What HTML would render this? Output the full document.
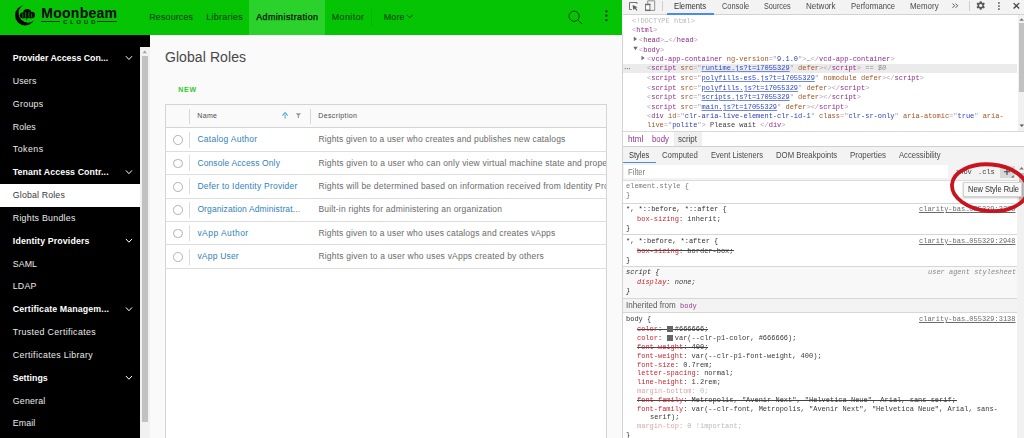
<!DOCTYPE html>
<html lang="en"><head><meta charset="utf-8"><title>Global Roles</title>
<style>
html,body{margin:0;padding:0}
body{width:1024px;height:438px;position:relative;overflow:hidden;background:#fafafa;font-family:"Liberation Sans",sans-serif}
body>div,body>svg,.t,.clip{position:absolute}
.t{white-space:pre;line-height:0}
.clip{overflow:hidden}
.clip>.t{position:absolute}

</style></head>
<body>
<div style="left:0px;top:0px;width:622.3px;height:35.2px;background:#04c404;"></div>
<div style="left:249.3px;top:0px;width:75.6px;height:35.2px;background:#2bd22b;"></div>
<div style="left:370.6px;top:9px;width:0.8px;height:17px;background:rgba(0,0,0,.08);"></div>
<div style="left:41.3px;top:21.1px;width:18.6px;height:0.8px;background:#063006;"></div>
<div style="left:97.3px;top:21.1px;width:19.7px;height:0.8px;background:#063006;"></div>
<svg style="left:0;top:0" width="622" height="35" viewBox="0 0 622 35">
<defs><mask id="mk"><rect x="0" y="0" width="60" height="35" fill="#fff"/><circle cx="28.1" cy="13.15" r="9.5" fill="#000"/></mask></defs>
<circle cx="25.1" cy="15.45" r="10.1" fill="#050505" mask="url(#mk)"/>
<g fill="#050505"><circle cx="22.7" cy="15.3" r="2.9"/><circle cx="27.2" cy="13" r="4"/><circle cx="31.8" cy="15" r="3.15"/><rect x="22.7" y="14" width="9.1" height="4.2"/></g>
<g stroke="#05c005" stroke-width="0.7" stroke-linecap="round"><path d="M22.9 14v3.2M25.7 12.4v4.8M28.9 12.4v4.8M31.7 14v3.2"/></g>
<path d="M26.6 18v2.2" stroke="#050505" stroke-width="0.6"/>
<path d="M406.6 14.7l3.1 3.1 3.1-3.1" fill="none" stroke="#0c4a0c" stroke-width="1"/>
<circle cx="574.1" cy="16.2" r="5.1" fill="none" stroke="#0a3a0a" stroke-width="0.9"/>
<path d="M578.5 20.6l3.3 3.2" stroke="#0a3a0a" stroke-width="1" stroke-linecap="round"/>
<circle cx="606.4" cy="11.3" r="1.15" fill="#083008"/><circle cx="606.4" cy="15.7" r="1.15" fill="#083008"/><circle cx="606.4" cy="20.2" r="1.15" fill="#083008"/>
</svg>
<div style="left:0px;top:35px;width:150px;height:403px;background:#000;"></div>
<div style="left:140.2px;top:47px;width:9.8px;height:391px;background:#f1f1f1;"></div>
<div style="left:141.5px;top:56.4px;width:6.3px;height:366px;background:#c1c1c1;"></div>
<svg style="left:140px;top:47px" width="10" height="10" viewBox="0 0 10 10"><path d="M2.6 6.3L4.7 3.6 6.8 6.3z" fill="#a0a0a0"/></svg>
<div style="left:0px;top:183.5px;width:140.2px;height:23.3px;background:#ffffff;"></div>
<svg style="left:0;top:0" width="150" height="438" viewBox="0 0 150 438"><g fill="none" stroke="#ffffff" stroke-width="1"><path d="M125.9 56.20l3.05 3.3 3.05-3.3"/><path d="M125.9 170.40l3.05 3.3 3.05-3.3"/><path d="M125.9 238.92l3.05 3.3 3.05-3.3"/><path d="M125.9 307.44l3.05 3.3 3.05-3.3"/><path d="M125.9 375.96l3.05 3.3 3.05-3.3"/></g></svg>
<div style="left:165px;top:104px;width:441.5px;height:340px;background:#ffffff;border:0.8px solid #d4d4d4;box-sizing:border-box"></div>
<div style="left:165px;top:104px;width:441.5px;height:23.8px;background:#fafafa;border:0.8px solid #d4d4d4;box-sizing:border-box"></div>
<div style="left:189.2px;top:108.5px;width:0.8px;height:15.4px;background:#d8d8d8;"></div>
<div style="left:310.0px;top:108.5px;width:0.8px;height:15.4px;background:#d8d8d8;"></div>
<svg style="left:280px;top:110px" width="24" height="12" viewBox="280 110 24 12">
<path d="M285.1 118.6v-4" fill="none" stroke="#55a6cf" stroke-width="1"/>
<path d="M282.5 115.6l2.6-3 2.6 3" fill="none" stroke="#55a6cf" stroke-width="1.1"/>
<path d="M295.8 113.2h5.2l-2 2.5v2.3h-1.2v-2.3z" fill="#9c9c9c"/>
</svg>
<div style="left:165.8px;top:150.79999999999998px;width:440px;height:0.8px;background:#dedede;"></div>
<div style="left:189.2px;top:131.6px;width:0.8px;height:16px;background:#dcdcdc;"></div>
<div style="left:173.1px;top:135.20px;width:9.6px;height:9.6px;border:0.8px solid #b0b0b0;border-radius:50%;box-sizing:border-box;background:#fff"></div>
<div style="left:165.8px;top:174.2px;width:440px;height:0.8px;background:#dedede;"></div>
<div style="left:189.2px;top:155.0px;width:0.8px;height:16px;background:#dcdcdc;"></div>
<div style="left:173.1px;top:158.60px;width:9.6px;height:9.6px;border:0.8px solid #b0b0b0;border-radius:50%;box-sizing:border-box;background:#fff"></div>
<div style="left:165.8px;top:197.6px;width:440px;height:0.8px;background:#dedede;"></div>
<div style="left:189.2px;top:178.4px;width:0.8px;height:16px;background:#dcdcdc;"></div>
<div style="left:173.1px;top:182.00px;width:9.6px;height:9.6px;border:0.8px solid #b0b0b0;border-radius:50%;box-sizing:border-box;background:#fff"></div>
<div style="left:165.8px;top:221.0px;width:440px;height:0.8px;background:#dedede;"></div>
<div style="left:189.2px;top:201.8px;width:0.8px;height:16px;background:#dcdcdc;"></div>
<div style="left:173.1px;top:205.40px;width:9.6px;height:9.6px;border:0.8px solid #b0b0b0;border-radius:50%;box-sizing:border-box;background:#fff"></div>
<div style="left:165.8px;top:244.39999999999998px;width:440px;height:0.8px;background:#dedede;"></div>
<div style="left:189.2px;top:225.2px;width:0.8px;height:16px;background:#dcdcdc;"></div>
<div style="left:173.1px;top:228.80px;width:9.6px;height:9.6px;border:0.8px solid #b0b0b0;border-radius:50%;box-sizing:border-box;background:#fff"></div>
<div style="left:165.8px;top:267.8px;width:440px;height:0.8px;background:#dedede;"></div>
<div style="left:189.2px;top:248.60000000000002px;width:0.8px;height:16px;background:#dcdcdc;"></div>
<div style="left:173.1px;top:252.20px;width:9.6px;height:9.6px;border:0.8px solid #b0b0b0;border-radius:50%;box-sizing:border-box;background:#fff"></div>
<div style="left:622.5px;top:0px;width:401.5px;height:438px;background:#ffffff;"></div>
<div style="left:622.2px;top:35px;width:0.8px;height:403px;background:#d2d2d2;"></div>
<div style="left:623.0px;top:0px;width:401.5px;height:14.6px;background:#f3f3f3;"></div>
<div style="left:623.0px;top:14.1px;width:401.5px;height:0.7px;background:#d2d2d2;"></div>
<div style="left:666.7px;top:13.1px;width:47.2px;height:1.5px;background:#4a8af4;"></div>
<div style="left:662.0px;top:0.8px;width:0.8px;height:9.8px;background:#cfcfcf;"></div>
<div style="left:969.1px;top:0.8px;width:0.8px;height:9.8px;background:#cfcfcf;"></div>
<svg style="left:622px;top:0" width="402" height="15" viewBox="622 0 402 15">
<g fill="none" stroke="#6a6a6a" stroke-width="0.95">
<path d="M637 4V2.5h-7.5v7h2.2" />
<path d="M647.7 3.6V0.8h7v9.6h-4.6" stroke="#8a8a8a"/>
<path d="M952.5 3.6l2.1 2.1-2.1 2.1M955.6 3.6l2.1 2.1-2.1 2.1" stroke="#555" stroke-width="1"/>
<path d="M1013.6 3.1l5.6 5.4M1019.2 3.1l-5.6 5.4" stroke="#444" stroke-width="1.3"/>
</g>
<path d="M632.6 4.9l5 2.3-2 0.6 1.8 2.2-0.9 0.7-1.7-2.3-1.5 1.5z" fill="#5a5a5a"/>
<rect x="645.6" y="4.2" width="4.3" height="6.4" fill="#fff" stroke="#6a6a6a" stroke-width="0.9"/>
<rect x="645.2" y="3.9" width="5.1" height="1.3" fill="#6a6a6a"/><rect x="645.2" y="9.6" width="5.1" height="1.3" fill="#6a6a6a"/>
<g fill="#5a5a5a">
<path d="M979.52 2.58L979.86 1.18L981.54 1.18L981.88 2.58L982.64 3.02L984.02 2.61L984.86 4.07L983.82 5.06L983.82 5.94L984.86 6.93L984.02 8.39L982.64 7.98L981.88 8.42L981.54 9.82L979.86 9.82L979.52 8.42L978.76 7.98L977.38 8.39L976.54 6.93L977.58 5.94L977.58 5.06L976.54 4.07L977.38 2.61L978.76 3.02z"/>
<rect x="998.1" y="2.2" width="1.6" height="1.6"/><rect x="998.1" y="5.3" width="1.6" height="1.6"/><rect x="998.1" y="8.3" width="1.6" height="1.6"/>
</g>
<circle cx="980.7" cy="5.5" r="1.6" fill="#f3f3f3"/>
</svg>
<div style="left:623.0px;top:63.5px;width:394.0px;height:9.6px;background:#ebebeb;"></div>
<svg style="left:622px;top:15px" width="402" height="116" viewBox="622 15 402 116">
<g fill="#6e6e6e"><path d="M633.8 36.6l3.2 2.3-3.2 2.3z"/><path d="M633.3 46.8h4.4l-2.2 3.4z"/><path d="M641.5 55.7l3.2 2.3-3.2 2.3z"/>
<circle cx="625.2" cy="68.6" r="0.6"/><circle cx="627.4" cy="68.6" r="0.6"/><circle cx="629.6" cy="68.6" r="0.6"/></g>
</svg>
<div style="left:1017.6px;top:15px;width:6.4px;height:116px;background:#f1f1f1;"></div>
<div style="left:1018.8px;top:23.4px;width:5.2px;height:68.2px;background:#c1c1c1;"></div>
<svg style="left:1017px;top:15px" width="7" height="116" viewBox="1017 15 7 116"><path d="M1019.3 20.8l2.3-2.6 2.3 2.6z" fill="#777"/><path d="M1019.6 124.6h4.4l-2.2 2.5z" fill="#555"/></svg>
<div style="left:623.0px;top:131.2px;width:401.5px;height:0.8px;background:#d8d8d8;"></div>
<div style="left:673.9px;top:132px;width:27.8px;height:14px;background:#efefef;"></div>
<div style="left:623.0px;top:146px;width:401.5px;height:17.9px;background:#f3f3f3;border-top:0.8px solid #d0d0d0;border-bottom:0.8px solid #d0d0d0;box-sizing:border-box"></div>
<div style="left:623px;top:161.7px;width:33px;height:2.0px;background:#4a8af4;"></div>
<div style="left:623.0px;top:163.4px;width:394.5px;height:17.2px;background:#f3f3f3;"></div>
<div style="left:624px;top:164.8px;width:324.4px;height:13.2px;background:#ffffff;"></div>
<div style="left:999.8px;top:165.6px;width:14.8px;height:12.8px;background:#d8d8d8;"></div>
<svg style="left:999px;top:165px" width="17" height="14" viewBox="999 165 17 14">
<path d="M1007 168.7v6.2M1003.9 171.8h6.2" stroke="#444" stroke-width="1.1"/><path d="M1013.6 175.2v2.4h-2.4z" fill="#555"/></svg>
<div style="left:623.0px;top:180.3px;width:394.5px;height:0.8px;background:#dcdcdc;"></div>
<div style="left:623.0px;top:202.6px;width:394.5px;height:0.8px;background:#d6d6d6;"></div>
<div style="left:623.0px;top:233.79999999999998px;width:394.5px;height:0.8px;background:#d6d6d6;"></div>
<div style="left:636.7px;top:250.4px;width:97px;height:0.8px;background:#444;"></div>
<div style="left:623.0px;top:266.1px;width:394.5px;height:0.8px;background:#d6d6d6;"></div>
<div style="left:623.0px;top:266.9px;width:394.5px;height:31px;background:#f8f8f8;"></div>
<div style="left:623.0px;top:298px;width:394.5px;height:15.2px;background:#f3f3f3;border-top:0.8px solid #d6d6d6;border-bottom:0.8px solid #d6d6d6;box-sizing:border-box"></div>
<div style="left:636.7px;top:328.9px;width:71.8px;height:0.8px;background:#444;"></div>
<div style="left:667.3px;top:326.0px;width:6.2px;height:5.6px;background:#666;"></div>
<div style="left:667.3px;top:335.0px;width:6.2px;height:5.6px;background:#666;"></div>
<div style="left:636.7px;top:346.9px;width:71.8px;height:0.8px;background:#444;"></div>
<div style="left:636.7px;top:399.9px;width:320px;height:0.8px;background:#444;"></div>
<div style="left:1017.2px;top:163.4px;width:6.8px;height:275px;background:#f1f1f1;"></div>
<div style="left:1018.6px;top:172.8px;width:5.4px;height:28px;background:#c1c1c1;"></div>
<svg style="left:1017px;top:164px" width="7" height="8" viewBox="1017 164 7 8"><path d="M1019.3 169.6l2.3-2.6 2.3 2.6z" fill="#777"/></svg>
<span class="t" style="left:41.30px;top:12.55px;font:700 14.0px/0 'Liberation Sans', sans-serif;color:#060606;letter-spacing:0.258px">Moonbeam</span>
<span class="t" style="left:63.20px;top:21.86px;font:400 5.6px/0 'Liberation Sans', sans-serif;color:#031803;letter-spacing:3.102px;-webkit-text-stroke:0.2px currentColor">CLOUD</span>
<span class="t" style="left:149.30px;top:16.72px;font:400 8.9px/0 'Liberation Sans', sans-serif;color:#094409;letter-spacing:0.160px;-webkit-text-stroke:0.1px currentColor">Resources</span>
<span class="t" style="left:206.20px;top:16.72px;font:400 8.9px/0 'Liberation Sans', sans-serif;color:#094409;letter-spacing:0.307px;-webkit-text-stroke:0.1px currentColor">Libraries</span>
<span class="t" style="left:256.20px;top:16.72px;font:400 8.9px/0 'Liberation Sans', sans-serif;color:#021002;letter-spacing:0.428px;-webkit-text-stroke:0.25px currentColor">Administration</span>
<span class="t" style="left:331.80px;top:16.72px;font:400 8.9px/0 'Liberation Sans', sans-serif;color:#094409;letter-spacing:0.434px;-webkit-text-stroke:0.1px currentColor">Monitor</span>
<span class="t" style="left:383.70px;top:16.72px;font:400 8.9px/0 'Liberation Sans', sans-serif;color:#094409;letter-spacing:0.189px;-webkit-text-stroke:0.1px currentColor">More</span>
<span class="t" style="left:12.80px;top:58.05px;font:700 8.8px/0 'Liberation Sans', sans-serif;color:#ffffff;letter-spacing:-0.010px">Provider Access Con...</span>
<span class="t" style="left:12.80px;top:80.89px;font:400 8.8px/0 'Liberation Sans', sans-serif;color:#ebebeb;letter-spacing:0.129px">Users</span>
<span class="t" style="left:12.80px;top:103.73px;font:400 8.8px/0 'Liberation Sans', sans-serif;color:#ebebeb;letter-spacing:0.308px">Groups</span>
<span class="t" style="left:12.80px;top:126.57px;font:400 8.8px/0 'Liberation Sans', sans-serif;color:#ebebeb;letter-spacing:0.075px">Roles</span>
<span class="t" style="left:12.80px;top:149.41px;font:400 8.8px/0 'Liberation Sans', sans-serif;color:#ebebeb;letter-spacing:0.485px">Tokens</span>
<span class="t" style="left:12.80px;top:172.25px;font:700 8.8px/0 'Liberation Sans', sans-serif;color:#ffffff;letter-spacing:0.092px">Tenant Access Contr...</span>
<span class="t" style="left:12.80px;top:195.09px;font:400 8.8px/0 'Liberation Sans', sans-serif;color:#3a3a3a;letter-spacing:0.148px">Global Roles</span>
<span class="t" style="left:12.80px;top:217.93px;font:400 8.8px/0 'Liberation Sans', sans-serif;color:#ebebeb;letter-spacing:0.256px">Rights Bundles</span>
<span class="t" style="left:12.80px;top:240.77px;font:700 8.8px/0 'Liberation Sans', sans-serif;color:#ffffff;letter-spacing:0.135px">Identity Providers</span>
<span class="t" style="left:12.80px;top:263.61px;font:400 8.8px/0 'Liberation Sans', sans-serif;color:#ebebeb;letter-spacing:0.077px">SAML</span>
<span class="t" style="left:12.80px;top:286.45px;font:400 8.8px/0 'Liberation Sans', sans-serif;color:#ebebeb;letter-spacing:0.172px">LDAP</span>
<span class="t" style="left:12.80px;top:309.29px;font:700 8.8px/0 'Liberation Sans', sans-serif;color:#ffffff;letter-spacing:0.130px">Certificate Managem...</span>
<span class="t" style="left:12.80px;top:332.13px;font:400 8.8px/0 'Liberation Sans', sans-serif;color:#ebebeb;letter-spacing:0.361px">Trusted Certificates</span>
<span class="t" style="left:12.80px;top:354.97px;font:400 8.8px/0 'Liberation Sans', sans-serif;color:#ebebeb;letter-spacing:0.345px">Certificates Library</span>
<span class="t" style="left:12.80px;top:377.81px;font:700 8.8px/0 'Liberation Sans', sans-serif;color:#ffffff;letter-spacing:0.028px">Settings</span>
<span class="t" style="left:12.80px;top:400.65px;font:400 8.8px/0 'Liberation Sans', sans-serif;color:#ebebeb;letter-spacing:0.201px">General</span>
<span class="t" style="left:12.80px;top:423.49px;font:400 8.8px/0 'Liberation Sans', sans-serif;color:#ebebeb;letter-spacing:0.100px">Email</span>
<span class="t" style="left:164.90px;top:57.35px;font:400 14.0px/0 'Liberation Sans', sans-serif;color:#484848;letter-spacing:0.095px">Global Roles</span>
<span class="t" style="left:178.30px;top:89.57px;font:700 7.0px/0 'Liberation Sans', sans-serif;color:#2fc92f;letter-spacing:0.728px">NEW</span>
<span class="t" style="left:197.30px;top:116.47px;font:400 7.0px/0 'Liberation Sans', sans-serif;color:#4c4c4c;letter-spacing:0.337px">Name</span>
<span class="t" style="left:318.30px;top:116.47px;font:400 7.0px/0 'Liberation Sans', sans-serif;color:#4c4c4c;letter-spacing:0.368px">Description</span>
<span class="t" style="left:197.40px;top:139.25px;font:400 8.5px/0 'Liberation Sans', sans-serif;color:#2f82ba;letter-spacing:0.274px">Catalog Author</span>
<span class="t" style="left:318.40px;top:139.25px;font:400 8.5px/0 'Liberation Sans', sans-serif;color:#6a6a6a;letter-spacing:0.162px">Rights given to a user who creates and publishes new catalogs</span>
<span class="t" style="left:197.40px;top:162.65px;font:400 8.5px/0 'Liberation Sans', sans-serif;color:#2f82ba;letter-spacing:0.121px">Console Access Only</span>
<div class="clip" style="left:318px;width:287.6px;top:152.65px;height:20px"><span class="t" style="left:0.40px;top:162.65px;font:400 8.5px/0 'Liberation Sans', sans-serif;color:#6a6a6a;letter-spacing:0.200px;top:10px">Rights given to a user who can only view virtual machine state and properties</span></div>
<span class="t" style="left:197.40px;top:186.05px;font:400 8.5px/0 'Liberation Sans', sans-serif;color:#2f82ba;letter-spacing:0.235px">Defer to Identity Provider</span>
<div class="clip" style="left:318px;width:287.6px;top:176.05px;height:20px"><span class="t" style="left:0.40px;top:186.05px;font:400 8.5px/0 'Liberation Sans', sans-serif;color:#6a6a6a;letter-spacing:0.200px;top:10px">Rights will be determined based on information received from Identity Provider</span></div>
<span class="t" style="left:197.40px;top:209.45px;font:400 8.5px/0 'Liberation Sans', sans-serif;color:#2f82ba;letter-spacing:0.112px">Organization Administrat...</span>
<span class="t" style="left:318.40px;top:209.45px;font:400 8.5px/0 'Liberation Sans', sans-serif;color:#6a6a6a;letter-spacing:0.183px">Built-in rights for administering an organization</span>
<span class="t" style="left:197.40px;top:232.85px;font:400 8.5px/0 'Liberation Sans', sans-serif;color:#2f82ba;letter-spacing:0.449px">vApp Author</span>
<span class="t" style="left:318.40px;top:232.85px;font:400 8.5px/0 'Liberation Sans', sans-serif;color:#6a6a6a;letter-spacing:0.167px">Rights given to a user who uses catalogs and creates vApps</span>
<span class="t" style="left:197.40px;top:256.25px;font:400 8.5px/0 'Liberation Sans', sans-serif;color:#2f82ba;letter-spacing:0.202px">vApp User</span>
<span class="t" style="left:318.40px;top:256.25px;font:400 8.5px/0 'Liberation Sans', sans-serif;color:#6a6a6a;letter-spacing:0.200px">Rights given to a user who uses vApps created by others</span>
<span class="t" style="left:674.00px;top:5.85px;font:400 8.8px/0 'Liberation Sans', sans-serif;color:#333;transform:scaleX(0.8753);transform-origin:0 0">Elements</span>
<span class="t" style="left:721.60px;top:5.85px;font:400 8.8px/0 'Liberation Sans', sans-serif;color:#4a4a4a;transform:scaleX(0.8426);transform-origin:0 0">Console</span>
<span class="t" style="left:764.00px;top:5.85px;font:400 8.8px/0 'Liberation Sans', sans-serif;color:#4a4a4a;transform:scaleX(0.824);transform-origin:0 0">Sources</span>
<span class="t" style="left:806.00px;top:5.85px;font:400 8.8px/0 'Liberation Sans', sans-serif;color:#4a4a4a;transform:scaleX(0.9174);transform-origin:0 0">Network</span>
<span class="t" style="left:850.80px;top:5.85px;font:400 8.8px/0 'Liberation Sans', sans-serif;color:#4a4a4a;transform:scaleX(0.8757);transform-origin:0 0">Performance</span>
<span class="t" style="left:910.40px;top:5.85px;font:400 8.8px/0 'Liberation Sans', sans-serif;color:#4a4a4a;transform:scaleX(0.8999);transform-origin:0 0">Memory</span>
<span class="t" style="left:631.60px;top:21.07px;font:400 8.0px/0 'Liberation Mono', monospace;color:#333;transform:scaleX(0.8738);transform-origin:0 0"><span style="color:#b8b8b8">&lt;!DOCTYPE html&gt;</span></span>
<span class="t" style="left:631.60px;top:30.07px;font:400 8.0px/0 'Liberation Mono', monospace;color:#333;transform:scaleX(0.8738);transform-origin:0 0"><span style="color:#b3a2b2">&lt;</span><span style="color:#8f2b89">html</span><span style="color:#b3a2b2">&gt;</span></span>
<span class="t" style="left:639.40px;top:40.07px;font:400 8.0px/0 'Liberation Mono', monospace;color:#333;transform:scaleX(0.8738);transform-origin:0 0"><span style="color:#b3a2b2">&lt;</span><span style="color:#8f2b89">head</span><span style="color:#b3a2b2">&gt;</span><span style="color:#3c3c3c">…</span><span style="color:#b3a2b2">&lt;/</span><span style="color:#8f2b89">head</span><span style="color:#b3a2b2">&gt;</span></span>
<span class="t" style="left:639.40px;top:50.07px;font:400 8.0px/0 'Liberation Mono', monospace;color:#333;transform:scaleX(0.8738);transform-origin:0 0"><span style="color:#b3a2b2">&lt;</span><span style="color:#8f2b89">body</span><span style="color:#b3a2b2">&gt;</span></span>
<span class="t" style="left:647.20px;top:59.07px;font:400 8.0px/0 'Liberation Mono', monospace;color:#333;transform:scaleX(0.8738);transform-origin:0 0"><span style="color:#b3a2b2">&lt;</span><span style="color:#8f2b89">vcd-app-container</span><span style="color:#9d5422"> ng-version</span><span style="color:#b3a2b2">="</span><span style="color:#2c3cb6">9.1.0</span><span style="color:#b3a2b2">"</span><span style="color:#b3a2b2">&gt;</span><span style="color:#3c3c3c">…</span><span style="color:#b3a2b2">&lt;/</span><span style="color:#8f2b89">vcd-app-container</span><span style="color:#b3a2b2">&gt;</span></span>
<span class="t" style="left:647.20px;top:68.07px;font:400 8.0px/0 'Liberation Mono', monospace;color:#333;transform:scaleX(0.8738);transform-origin:0 0"><span style="color:#b3a2b2">&lt;</span><span style="color:#8f2b89">script</span><span style="color:#9d5422"> src</span><span style="color:#b3a2b2">="</span><span style="color:#2b49c4;text-decoration:underline 0.6px;text-underline-offset:0.5px;text-decoration-color:#6f86dc">runtime.js?t=17055329</span><span style="color:#b3a2b2">"</span><span style="color:#9d5422"> defer</span><span style="color:#b3a2b2">&gt;</span><span style="color:#b3a2b2">&lt;/</span><span style="color:#8f2b89">script</span><span style="color:#b3a2b2">&gt;</span><span style="color:#8a8a8a;font-style:italic"> == $0</span></span>
<span class="t" style="left:647.20px;top:78.07px;font:400 8.0px/0 'Liberation Mono', monospace;color:#333;transform:scaleX(0.8738);transform-origin:0 0"><span style="color:#b3a2b2">&lt;</span><span style="color:#8f2b89">script</span><span style="color:#9d5422"> src</span><span style="color:#b3a2b2">="</span><span style="color:#2b49c4;text-decoration:underline 0.6px;text-underline-offset:0.5px;text-decoration-color:#6f86dc">polyfills-es5.js?t=17055329</span><span style="color:#b3a2b2">"</span><span style="color:#9d5422"> nomodule defer</span><span style="color:#b3a2b2">&gt;</span><span style="color:#b3a2b2">&lt;/</span><span style="color:#8f2b89">script</span><span style="color:#b3a2b2">&gt;</span></span>
<span class="t" style="left:647.20px;top:88.07px;font:400 8.0px/0 'Liberation Mono', monospace;color:#333;transform:scaleX(0.8738);transform-origin:0 0"><span style="color:#b3a2b2">&lt;</span><span style="color:#8f2b89">script</span><span style="color:#9d5422"> src</span><span style="color:#b3a2b2">="</span><span style="color:#2b49c4;text-decoration:underline 0.6px;text-underline-offset:0.5px;text-decoration-color:#6f86dc">polyfills.js?t=17055329</span><span style="color:#b3a2b2">"</span><span style="color:#9d5422"> defer</span><span style="color:#b3a2b2">&gt;</span><span style="color:#b3a2b2">&lt;/</span><span style="color:#8f2b89">script</span><span style="color:#b3a2b2">&gt;</span></span>
<span class="t" style="left:647.20px;top:97.07px;font:400 8.0px/0 'Liberation Mono', monospace;color:#333;transform:scaleX(0.8738);transform-origin:0 0"><span style="color:#b3a2b2">&lt;</span><span style="color:#8f2b89">script</span><span style="color:#9d5422"> src</span><span style="color:#b3a2b2">="</span><span style="color:#2b49c4;text-decoration:underline 0.6px;text-underline-offset:0.5px;text-decoration-color:#6f86dc">scripts.js?t=17055329</span><span style="color:#b3a2b2">"</span><span style="color:#9d5422"> defer</span><span style="color:#b3a2b2">&gt;</span><span style="color:#b3a2b2">&lt;/</span><span style="color:#8f2b89">script</span><span style="color:#b3a2b2">&gt;</span></span>
<span class="t" style="left:647.20px;top:107.07px;font:400 8.0px/0 'Liberation Mono', monospace;color:#333;transform:scaleX(0.8738);transform-origin:0 0"><span style="color:#b3a2b2">&lt;</span><span style="color:#8f2b89">script</span><span style="color:#9d5422"> src</span><span style="color:#b3a2b2">="</span><span style="color:#2b49c4;text-decoration:underline 0.6px;text-underline-offset:0.5px;text-decoration-color:#6f86dc">main.js?t=17055329</span><span style="color:#b3a2b2">"</span><span style="color:#9d5422"> defer</span><span style="color:#b3a2b2">&gt;</span><span style="color:#b3a2b2">&lt;/</span><span style="color:#8f2b89">script</span><span style="color:#b3a2b2">&gt;</span></span>
<span class="t" style="left:647.20px;top:116.07px;font:400 8.0px/0 'Liberation Mono', monospace;color:#333;transform:scaleX(0.8738);transform-origin:0 0"><span style="color:#b3a2b2">&lt;</span><span style="color:#8f2b89">div</span><span style="color:#9d5422"> id</span><span style="color:#b3a2b2">="</span><span style="color:#2c3cb6">clr-aria-live-element-clr-id-1</span><span style="color:#b3a2b2">"</span><span style="color:#9d5422"> class</span><span style="color:#b3a2b2">="</span><span style="color:#2c3cb6">clr-sr-only</span><span style="color:#b3a2b2">"</span><span style="color:#9d5422"> aria-atomic</span><span style="color:#b3a2b2">="</span><span style="color:#2c3cb6">true</span><span style="color:#b3a2b2">"</span><span style="color:#9d5422"> aria-</span></span>
<span class="t" style="left:647.20px;top:125.07px;font:400 8.0px/0 'Liberation Mono', monospace;color:#333;transform:scaleX(0.8738);transform-origin:0 0"><span style="color:#9d5422">live</span><span style="color:#b3a2b2">="</span><span style="color:#2c3cb6">polite</span><span style="color:#b3a2b2">"</span><span style="color:#b3a2b2">&gt;</span><span style="color:#3c3c3c"> Please wait </span><span style="color:#b3a2b2">&lt;/</span><span style="color:#8f2b89">div</span><span style="color:#b3a2b2">&gt;</span></span>
<span class="t" style="left:627.80px;top:138.52px;font:400 8.9px/0 'Liberation Sans', sans-serif;color:#93358e;transform:scaleX(0.9117);transform-origin:0 0">html</span>
<span class="t" style="left:652.30px;top:138.52px;font:400 8.9px/0 'Liberation Sans', sans-serif;color:#93358e;transform:scaleX(0.8779);transform-origin:0 0">body</span>
<span class="t" style="left:678.30px;top:138.52px;font:400 8.9px/0 'Liberation Sans', sans-serif;color:#444;transform:scaleX(0.8954);transform-origin:0 0">script</span>
<span class="t" style="left:628.90px;top:154.75px;font:400 8.8px/0 'Liberation Sans', sans-serif;color:#333;transform:scaleX(0.8469);transform-origin:0 0">Styles</span>
<span class="t" style="left:661.90px;top:154.75px;font:400 8.8px/0 'Liberation Sans', sans-serif;color:#4a4a4a;transform:scaleX(0.8844);transform-origin:0 0">Computed</span>
<span class="t" style="left:711.00px;top:154.75px;font:400 8.8px/0 'Liberation Sans', sans-serif;color:#4a4a4a;transform:scaleX(0.8575);transform-origin:0 0">Event Listeners</span>
<span class="t" style="left:775.80px;top:154.75px;font:400 8.8px/0 'Liberation Sans', sans-serif;color:#4a4a4a;transform:scaleX(0.8816);transform-origin:0 0">DOM Breakpoints</span>
<span class="t" style="left:850.30px;top:154.75px;font:400 8.8px/0 'Liberation Sans', sans-serif;color:#4a4a4a;transform:scaleX(0.8979);transform-origin:0 0">Properties</span>
<span class="t" style="left:899.00px;top:154.75px;font:400 8.8px/0 'Liberation Sans', sans-serif;color:#4a4a4a;transform:scaleX(0.8705);transform-origin:0 0">Accessibility</span>
<span class="t" style="left:627.80px;top:171.65px;font:400 8.8px/0 'Liberation Sans', sans-serif;color:#7c7c7c;transform:scaleX(0.8792);transform-origin:0 0">Filter</span>
<span class="t" style="left:955.20px;top:171.77px;font:400 8.0px/0 'Liberation Mono', monospace;color:#333;transform:scaleX(0.8738);transform-origin:0 0"><span style="color:#3a3a3a">:hov</span></span>
<span class="t" style="left:978.40px;top:171.77px;font:400 8.0px/0 'Liberation Mono', monospace;color:#333;transform:scaleX(0.8738);transform-origin:0 0"><span style="color:#3a3a3a">.cls</span></span>
<span class="t" style="left:625.80px;top:186.07px;font:400 8.0px/0 'Liberation Mono', monospace;color:#333;transform:scaleX(0.8738);transform-origin:0 0"><span style="color:#777">element.style {</span></span>
<span class="t" style="left:625.80px;top:195.47px;font:400 8.0px/0 'Liberation Mono', monospace;color:#333;transform:scaleX(0.8738);transform-origin:0 0"><span style="color:#777">}</span></span>
<span class="t" style="left:625.80px;top:209.07px;font:400 8.0px/0 'Liberation Mono', monospace;color:#333;transform:scaleX(0.8738);transform-origin:0 0"><span style="color:#303030">*, *::before, *::after {</span></span>
<span class="t" style="left:919.12px;top:209.07px;font:400 8.0px/0 'Liberation Mono', monospace;color:#333;transform:scaleX(0.8738);transform-origin:0 0"><span style="color:#6a6a6a;text-decoration:underline 0.6px;text-underline-offset:0.5px;text-decoration-color:#6a6a6a">clarity-bas…055329:3375</span></span>
<span class="t" style="left:636.70px;top:218.77px;font:400 8.0px/0 'Liberation Mono', monospace;color:#333;transform:scaleX(0.8738);transform-origin:0 0"><span style="color:#c9282f">box-sizing</span><span style="color:#383838">: </span><span style="color:#383838">inherit;</span></span>
<span class="t" style="left:625.80px;top:228.07px;font:400 8.0px/0 'Liberation Mono', monospace;color:#333;transform:scaleX(0.8738);transform-origin:0 0"><span style="color:#303030">}</span></span>
<span class="t" style="left:625.80px;top:240.57px;font:400 8.0px/0 'Liberation Mono', monospace;color:#333;transform:scaleX(0.8738);transform-origin:0 0"><span style="color:#303030">*, *:before, *:after {</span></span>
<span class="t" style="left:919.12px;top:240.57px;font:400 8.0px/0 'Liberation Mono', monospace;color:#333;transform:scaleX(0.8738);transform-origin:0 0"><span style="color:#6a6a6a;text-decoration:underline 0.6px;text-underline-offset:0.5px;text-decoration-color:#6a6a6a">clarity-bas…055329:2948</span></span>
<span class="t" style="left:636.70px;top:251.07px;font:400 8.0px/0 'Liberation Mono', monospace;color:#333;transform:scaleX(0.8738);transform-origin:0 0"><span style="color:#c9282f">box-sizing</span><span style="color:#383838">: </span><span style="color:#383838">border-box;</span></span>
<span class="t" style="left:625.80px;top:259.57px;font:400 8.0px/0 'Liberation Mono', monospace;color:#333;transform:scaleX(0.8738);transform-origin:0 0"><span style="color:#303030">}</span></span>
<span class="t" style="left:625.80px;top:272.17px;font:italic 400 8.0px/0 'Liberation Mono', monospace;color:#333;transform:scaleX(0.8738);transform-origin:0 0"><span style="color:#303030">script {</span></span>
<span class="t" style="left:927.50px;top:272.17px;font:italic 400 8.0px/0 'Liberation Mono', monospace;color:#333;transform:scaleX(0.8738);transform-origin:0 0"><span style="color:#8a8a8a">user agent stylesheet</span></span>
<span class="t" style="left:636.70px;top:281.97px;font:italic 400 8.0px/0 'Liberation Mono', monospace;color:#333;transform:scaleX(0.8738);transform-origin:0 0"><span style="color:#c9282f">display</span><span style="color:#383838">: </span><span style="color:#383838">none;</span></span>
<span class="t" style="left:625.80px;top:291.07px;font:italic 400 8.0px/0 'Liberation Mono', monospace;color:#333;transform:scaleX(0.8738);transform-origin:0 0"><span style="color:#303030">}</span></span>
<span class="t" style="left:626.00px;top:304.65px;font:400 8.8px/0 'Liberation Sans', sans-serif;color:#5a5a5a;transform:scaleX(0.9174);transform-origin:0 0">Inherited from</span>
<span class="t" style="left:679.80px;top:305.57px;font:400 8.0px/0 'Liberation Mono', monospace;color:#333;transform:scaleX(0.8738);transform-origin:0 0"><span style="color:#93358e">body</span></span>
<span class="t" style="left:625.80px;top:319.17px;font:400 8.0px/0 'Liberation Mono', monospace;color:#333;transform:scaleX(0.8738);transform-origin:0 0"><span style="color:#303030">body {</span></span>
<span class="t" style="left:919.12px;top:319.17px;font:400 8.0px/0 'Liberation Mono', monospace;color:#333;transform:scaleX(0.8738);transform-origin:0 0"><span style="color:#6a6a6a;text-decoration:underline 0.6px;text-underline-offset:0.5px;text-decoration-color:#6a6a6a">clarity-bas…055329:3138</span></span>
<span class="t" style="left:636.70px;top:329.07px;font:400 8.0px/0 'Liberation Mono', monospace;color:#333;transform:scaleX(0.8738);transform-origin:0 0"><span style="color:#c9282f">color</span><span style="color:#383838">: </span><span style="color:#383838">  </span><span style="color:#383838">#666666;</span></span>
<span class="t" style="left:636.70px;top:338.07px;font:400 8.0px/0 'Liberation Mono', monospace;color:#333;transform:scaleX(0.8738);transform-origin:0 0"><span style="color:#c9282f">color</span><span style="color:#383838">: </span><span style="color:#383838">  </span><span style="color:#383838">var(--clr-p1-color, #666666);</span></span>
<span class="t" style="left:636.70px;top:347.07px;font:400 8.0px/0 'Liberation Mono', monospace;color:#333;transform:scaleX(0.8738);transform-origin:0 0"><span style="color:#c9282f">font-weight</span><span style="color:#383838">: </span><span style="color:#383838">400;</span></span>
<span class="t" style="left:636.70px;top:356.07px;font:400 8.0px/0 'Liberation Mono', monospace;color:#333;transform:scaleX(0.8738);transform-origin:0 0"><span style="color:#c9282f">font-weight</span><span style="color:#383838">: </span><span style="color:#383838">var(--clr-p1-font-weight, 400);</span></span>
<span class="t" style="left:636.70px;top:365.07px;font:400 8.0px/0 'Liberation Mono', monospace;color:#333;transform:scaleX(0.8738);transform-origin:0 0"><span style="color:#c9282f">font-size</span><span style="color:#383838">: </span><span style="color:#383838">0.7rem;</span></span>
<span class="t" style="left:636.70px;top:373.07px;font:400 8.0px/0 'Liberation Mono', monospace;color:#333;transform:scaleX(0.8738);transform-origin:0 0"><span style="color:#c9282f">letter-spacing</span><span style="color:#383838">: </span><span style="color:#383838">normal;</span></span>
<span class="t" style="left:636.70px;top:382.07px;font:400 8.0px/0 'Liberation Mono', monospace;color:#333;transform:scaleX(0.8738);transform-origin:0 0"><span style="color:#c9282f">line-height</span><span style="color:#383838">: </span><span style="color:#383838">1.2rem;</span></span>
<span class="t" style="left:636.70px;top:391.07px;font:400 8.0px/0 'Liberation Mono', monospace;color:#333;transform:scaleX(0.8738);transform-origin:0 0"><span style="color:#dca6a6">margin-bottom</span><span style="color:#b9b9b9">: </span><span style="color:#b9b9b9">0;</span></span>
<span class="t" style="left:636.70px;top:400.07px;font:400 8.0px/0 'Liberation Mono', monospace;color:#333;transform:scaleX(0.8738);transform-origin:0 0"><span style="color:#c9282f">font-family</span><span style="color:#383838">: </span><span style="color:#383838">Metropolis, "Avenir Next", "Helvetica Neue", Arial, sans-serif;</span></span>
<span class="t" style="left:636.70px;top:409.07px;font:400 8.0px/0 'Liberation Mono', monospace;color:#333;transform:scaleX(0.8738);transform-origin:0 0"><span style="color:#c9282f">font-family</span><span style="color:#383838">: </span><span style="color:#383838">var(--clr-font, Metropolis, "Avenir Next", "Helvetica Neue", Arial, sans-</span></span>
<span class="t" style="left:650.00px;top:417.07px;font:400 8.0px/0 'Liberation Mono', monospace;color:#333;transform:scaleX(0.8738);transform-origin:0 0"><span style="color:#383838">serif);</span></span>
<span class="t" style="left:636.70px;top:426.07px;font:400 8.0px/0 'Liberation Mono', monospace;color:#333;transform:scaleX(0.8738);transform-origin:0 0"><span style="color:#dca6a6">margin-top</span><span style="color:#b9b9b9">: </span><span style="color:#b9b9b9">0 !important;</span></span>
<span class="t" style="left:625.80px;top:434.87px;font:400 8.0px/0 'Liberation Mono', monospace;color:#333;transform:scaleX(0.8738);transform-origin:0 0"><span style="color:#303030">}</span></span>
<span class="t" style="left:967.90px;top:189.12px;font:400 8.9px/0 'Liberation Sans', sans-serif;color:#2e2e2e;transform:scaleX(0.8406);transform-origin:0 0;z-index:6">New Style Rule</span>
<div style="left:962.5px;top:181.5px;width:59px;height:15.8px;background:#f9f9f9;border:0.8px solid #d2d2d2;box-sizing:border-box;box-shadow:0 1px 2px rgba(0,0,0,.25);z-index:5"></div>
<svg style="left:940px;top:150px;z-index:7" width="84" height="80" viewBox="940 150 84 80">
<ellipse cx="989.8" cy="187.7" rx="37.9" ry="23.3" fill="none" stroke="#c8141e" stroke-width="3.8" transform="rotate(5 989.8 187.7)"/></svg>
</body></html>
